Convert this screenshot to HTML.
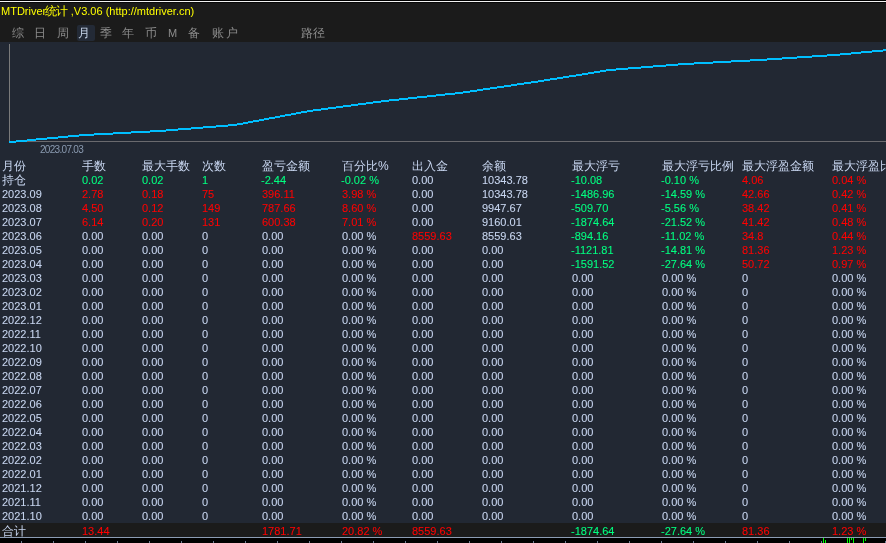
<!DOCTYPE html>
<html><head><meta charset="utf-8"><style>
*{margin:0;padding:0;box-sizing:border-box}
html,body{width:886px;height:543px;overflow:hidden;background:#222833;font-family:"Liberation Sans",sans-serif}
#top{position:absolute;left:0;top:0;width:886px;height:42px;background:#1b1b1b}
#l0{position:absolute;left:0;top:0;width:886px;height:1px;background:#000}
#l1{position:absolute;left:0;top:1px;width:886px;height:1px;background:#f2f2f2}
#l2{position:absolute;left:0;top:2px;width:886px;height:1px;background:#080808}
#title{position:absolute;left:1px;top:5px;font-size:11px;line-height:12px;color:#ffff00;white-space:nowrap;will-change:transform}
.tab{position:absolute;top:25px;font-size:12px;line-height:16px;color:#8c8c8c;white-space:nowrap;will-change:transform}
.tab.m{font-size:11px;top:25px}
.sel{color:#c8d6ea}
#selbox{position:absolute;left:77px;top:25px;width:18px;height:16px;background:#232a36;border-radius:2px}
#chart{position:absolute;left:0;top:0}
.n,.c{position:absolute;white-space:nowrap;will-change:transform}
.n{font-size:11px;line-height:12px;margin-top:-2px;-webkit-text-stroke:0.08px currentColor}
.c{font-size:12px;line-height:14px;margin-top:-3px}
#date{position:absolute;left:40px;top:144px;font-size:10px;line-height:11px;color:#8a9ab0;letter-spacing:-0.7px;will-change:transform}
#tot{position:absolute;left:0;top:523px;width:886px;height:14px;background:#1b1b1b;overflow:hidden}
#bl{position:absolute;left:0;top:537px;width:886px;height:1px;background:#8c9cb4}
#bot{position:absolute;left:0;top:538px;width:886px;height:5px;background:#000}
.tk{position:absolute;top:541px;width:1px;height:2px;background:#6f7f95}
.gm{position:absolute;width:1px;background:#00ff00}
</style></head><body>
<div id="top"></div><div id="l0"></div><div id="l1"></div><div id="l2"></div>
<div id="title">MTDriver<span style="font-size:12px;margin-left:-1.5px;letter-spacing:-0.5px">统计</span> ,V3.06 (http://mtdriver.cn)</div>
<div id="selbox"></div>
<div class="tab" style="left:12px">综</div><div class="tab" style="left:34px">日</div><div class="tab" style="left:57px">周</div><div class="tab sel" style="left:78px">月</div><div class="tab" style="left:100px">季</div><div class="tab" style="left:122px">年</div><div class="tab" style="left:145px">币</div><div class="tab m" style="left:168px">M</div><div class="tab" style="left:188px">备</div><div class="tab" style="left:212px;letter-spacing:1.5px">账户</div><div class="tab" style="left:301px">路径</div>
<svg id="chart" width="886" height="160" shape-rendering="crispEdges">
<line x1="9.5" y1="44" x2="9.5" y2="142" stroke="#7a7a7a" stroke-width="1"/>
<line x1="9" y1="141.5" x2="886" y2="141.5" stroke="#6a6a6e" stroke-width="1"/>
<path d="M9 141h7v2h-7zM16 140h11v2h-11zM27 139h9v2h-9zM36 138h11v2h-11zM47 137h11v2h-11zM58 136h10v2h-10zM68 135h11v2h-11zM79 134h15v2h-15zM94 133h19v2h-19zM113 132h18v2h-18zM131 131h19v2h-19zM150 130h16v2h-16zM166 129h12v2h-12zM178 128h13v2h-13zM191 127h12v2h-12zM203 126h13v2h-13zM216 125h12v2h-12zM228 124h9v2h-9zM237 123h6v2h-6zM243 122h5v2h-5zM248 121h5v2h-5zM253 120h6v2h-6zM259 119h5v2h-5zM264 118h5v2h-5zM269 117h6v2h-6zM275 116h5v2h-5zM280 115h5v2h-5zM285 114h6v2h-6zM291 113h5v2h-5zM296 112h5v2h-5zM301 111h6v2h-6zM307 110h6v2h-6zM313 109h8v2h-8zM321 108h7v2h-7zM328 107h8v2h-8zM336 106h7v2h-7zM343 105h8v2h-8zM351 104h7v2h-7zM358 103h8v2h-8zM366 102h7v2h-7zM373 101h8v2h-8zM381 100h8v2h-8zM389 99h10v2h-10zM399 98h9v2h-9zM408 97h9v2h-9zM417 96h10v2h-10zM427 95h9v2h-9zM436 94h9v2h-9zM445 93h10v2h-10zM455 92h8v2h-8zM463 91h7v2h-7zM470 90h7v2h-7zM477 89h6v2h-6zM483 88h7v2h-7zM490 87h7v2h-7zM497 86h7v2h-7zM504 85h7v2h-7zM511 84h6v2h-6zM517 83h7v2h-7zM524 82h7v2h-7zM531 81h7v2h-7zM538 80h6v2h-6zM544 79h6v2h-6zM550 78h7v2h-7zM557 77h6v2h-6zM563 76h6v2h-6zM569 75h7v2h-7zM576 74h6v2h-6zM582 73h6v2h-6zM588 72h6v2h-6zM594 71h6v2h-6zM600 70h6v2h-6zM606 69h10v2h-10zM616 68h12v2h-12zM628 67h13v2h-13zM641 66h12v2h-12zM653 65h13v2h-13zM666 64h12v2h-12zM678 63h16v2h-16zM694 62h19v2h-19zM713 61h18v2h-18zM731 60h19v2h-19zM750 59h17v2h-17zM767 58h15v2h-15zM782 57h15v2h-15zM797 56h15v2h-15zM812 55h15v2h-15zM827 54h13v2h-13zM840 53h11v2h-11zM851 52h10v2h-10zM861 51h11v2h-11zM872 50h11v2h-11zM883 49h3v2h-3z" fill="#00bfff"/>
</svg>
<div id="date">2023.07.03</div>
<div class="c" style="left:2px;top:162px;color:#c8d6f0">月份</div>
<div class="c" style="left:82px;top:162px;color:#c8d6f0">手数</div>
<div class="c" style="left:142px;top:162px;color:#c8d6f0">最大手数</div>
<div class="c" style="left:202px;top:162px;color:#c8d6f0">次数</div>
<div class="c" style="left:262px;top:162px;color:#c8d6f0">盈亏金额</div>
<div class="c" style="left:342px;top:162px;color:#c8d6f0">百分比%</div>
<div class="c" style="left:412px;top:162px;color:#c8d6f0">出入金</div>
<div class="c" style="left:482px;top:162px;color:#c8d6f0">余额</div>
<div class="c" style="left:572px;top:162px;color:#c8d6f0">最大浮亏</div>
<div class="c" style="left:662px;top:162px;color:#c8d6f0">最大浮亏比例</div>
<div class="c" style="left:742px;top:162px;color:#c8d6f0">最大浮盈金额</div>
<div class="c" style="left:832px;top:162px;color:#c8d6f0">最大浮盈比例</div>
<div class="c" style="left:2px;top:176px;color:#c8d6f0">持仓</div>
<div class="n" style="left:82px;top:176px;color:#00ff80">0.02</div>
<div class="n" style="left:142px;top:176px;color:#00ff80">0.02</div>
<div class="n" style="left:202px;top:176px;color:#00ff80">1</div>
<div class="n" style="left:261px;top:176px;color:#00ff80">-2.44</div>
<div class="n" style="left:341px;top:176px;color:#00ff80">-0.02 %</div>
<div class="n" style="left:412px;top:176px;color:#c8d6f0">0.00</div>
<div class="n" style="left:482px;top:176px;color:#c8d6f0">10343.78</div>
<div class="n" style="left:571px;top:176px;color:#00ff80">-10.08</div>
<div class="n" style="left:661px;top:176px;color:#00ff80">-0.10 %</div>
<div class="n" style="left:742px;top:176px;color:#ff0000">4.06</div>
<div class="n" style="left:832px;top:176px;color:#ff0000">0.04 %</div>
<div class="n" style="left:2px;top:190px;color:#c8d6f0">2023.09</div>
<div class="n" style="left:82px;top:190px;color:#ff0000">2.78</div>
<div class="n" style="left:142px;top:190px;color:#ff0000">0.18</div>
<div class="n" style="left:202px;top:190px;color:#ff0000">75</div>
<div class="n" style="left:262px;top:190px;color:#ff0000">396.11</div>
<div class="n" style="left:342px;top:190px;color:#ff0000">3.98 %</div>
<div class="n" style="left:412px;top:190px;color:#c8d6f0">0.00</div>
<div class="n" style="left:482px;top:190px;color:#c8d6f0">10343.78</div>
<div class="n" style="left:571px;top:190px;color:#00ff80">-1486.96</div>
<div class="n" style="left:661px;top:190px;color:#00ff80">-14.59 %</div>
<div class="n" style="left:742px;top:190px;color:#ff0000">42.66</div>
<div class="n" style="left:832px;top:190px;color:#ff0000">0.42 %</div>
<div class="n" style="left:2px;top:204px;color:#c8d6f0">2023.08</div>
<div class="n" style="left:82px;top:204px;color:#ff0000">4.50</div>
<div class="n" style="left:142px;top:204px;color:#ff0000">0.12</div>
<div class="n" style="left:202px;top:204px;color:#ff0000">149</div>
<div class="n" style="left:262px;top:204px;color:#ff0000">787.66</div>
<div class="n" style="left:342px;top:204px;color:#ff0000">8.60 %</div>
<div class="n" style="left:412px;top:204px;color:#c8d6f0">0.00</div>
<div class="n" style="left:482px;top:204px;color:#c8d6f0">9947.67</div>
<div class="n" style="left:571px;top:204px;color:#00ff80">-509.70</div>
<div class="n" style="left:661px;top:204px;color:#00ff80">-5.56 %</div>
<div class="n" style="left:742px;top:204px;color:#ff0000">38.42</div>
<div class="n" style="left:832px;top:204px;color:#ff0000">0.41 %</div>
<div class="n" style="left:2px;top:218px;color:#c8d6f0">2023.07</div>
<div class="n" style="left:82px;top:218px;color:#ff0000">6.14</div>
<div class="n" style="left:142px;top:218px;color:#ff0000">0.20</div>
<div class="n" style="left:202px;top:218px;color:#ff0000">131</div>
<div class="n" style="left:262px;top:218px;color:#ff0000">600.38</div>
<div class="n" style="left:342px;top:218px;color:#ff0000">7.01 %</div>
<div class="n" style="left:412px;top:218px;color:#c8d6f0">0.00</div>
<div class="n" style="left:482px;top:218px;color:#c8d6f0">9160.01</div>
<div class="n" style="left:571px;top:218px;color:#00ff80">-1874.64</div>
<div class="n" style="left:661px;top:218px;color:#00ff80">-21.52 %</div>
<div class="n" style="left:742px;top:218px;color:#ff0000">41.42</div>
<div class="n" style="left:832px;top:218px;color:#ff0000">0.48 %</div>
<div class="n" style="left:2px;top:232px;color:#c8d6f0">2023.06</div>
<div class="n" style="left:82px;top:232px;color:#c8d6f0">0.00</div>
<div class="n" style="left:142px;top:232px;color:#c8d6f0">0.00</div>
<div class="n" style="left:202px;top:232px;color:#c8d6f0">0</div>
<div class="n" style="left:262px;top:232px;color:#c8d6f0">0.00</div>
<div class="n" style="left:342px;top:232px;color:#c8d6f0">0.00 %</div>
<div class="n" style="left:412px;top:232px;color:#ff0000">8559.63</div>
<div class="n" style="left:482px;top:232px;color:#c8d6f0">8559.63</div>
<div class="n" style="left:571px;top:232px;color:#00ff80">-894.16</div>
<div class="n" style="left:661px;top:232px;color:#00ff80">-11.02 %</div>
<div class="n" style="left:742px;top:232px;color:#ff0000">34.8</div>
<div class="n" style="left:832px;top:232px;color:#ff0000">0.44 %</div>
<div class="n" style="left:2px;top:246px;color:#c8d6f0">2023.05</div>
<div class="n" style="left:82px;top:246px;color:#c8d6f0">0.00</div>
<div class="n" style="left:142px;top:246px;color:#c8d6f0">0.00</div>
<div class="n" style="left:202px;top:246px;color:#c8d6f0">0</div>
<div class="n" style="left:262px;top:246px;color:#c8d6f0">0.00</div>
<div class="n" style="left:342px;top:246px;color:#c8d6f0">0.00 %</div>
<div class="n" style="left:412px;top:246px;color:#c8d6f0">0.00</div>
<div class="n" style="left:482px;top:246px;color:#c8d6f0">0.00</div>
<div class="n" style="left:571px;top:246px;color:#00ff80">-1121.81</div>
<div class="n" style="left:661px;top:246px;color:#00ff80">-14.81 %</div>
<div class="n" style="left:742px;top:246px;color:#ff0000">81.36</div>
<div class="n" style="left:832px;top:246px;color:#ff0000">1.23 %</div>
<div class="n" style="left:2px;top:260px;color:#c8d6f0">2023.04</div>
<div class="n" style="left:82px;top:260px;color:#c8d6f0">0.00</div>
<div class="n" style="left:142px;top:260px;color:#c8d6f0">0.00</div>
<div class="n" style="left:202px;top:260px;color:#c8d6f0">0</div>
<div class="n" style="left:262px;top:260px;color:#c8d6f0">0.00</div>
<div class="n" style="left:342px;top:260px;color:#c8d6f0">0.00 %</div>
<div class="n" style="left:412px;top:260px;color:#c8d6f0">0.00</div>
<div class="n" style="left:482px;top:260px;color:#c8d6f0">0.00</div>
<div class="n" style="left:571px;top:260px;color:#00ff80">-1591.52</div>
<div class="n" style="left:661px;top:260px;color:#00ff80">-27.64 %</div>
<div class="n" style="left:742px;top:260px;color:#ff0000">50.72</div>
<div class="n" style="left:832px;top:260px;color:#ff0000">0.97 %</div>
<div class="n" style="left:2px;top:274px;color:#c8d6f0">2023.03</div>
<div class="n" style="left:82px;top:274px;color:#c8d6f0">0.00</div>
<div class="n" style="left:142px;top:274px;color:#c8d6f0">0.00</div>
<div class="n" style="left:202px;top:274px;color:#c8d6f0">0</div>
<div class="n" style="left:262px;top:274px;color:#c8d6f0">0.00</div>
<div class="n" style="left:342px;top:274px;color:#c8d6f0">0.00 %</div>
<div class="n" style="left:412px;top:274px;color:#c8d6f0">0.00</div>
<div class="n" style="left:482px;top:274px;color:#c8d6f0">0.00</div>
<div class="n" style="left:572px;top:274px;color:#c8d6f0">0.00</div>
<div class="n" style="left:662px;top:274px;color:#c8d6f0">0.00 %</div>
<div class="n" style="left:742px;top:274px;color:#c8d6f0">0</div>
<div class="n" style="left:832px;top:274px;color:#c8d6f0">0.00 %</div>
<div class="n" style="left:2px;top:288px;color:#c8d6f0">2023.02</div>
<div class="n" style="left:82px;top:288px;color:#c8d6f0">0.00</div>
<div class="n" style="left:142px;top:288px;color:#c8d6f0">0.00</div>
<div class="n" style="left:202px;top:288px;color:#c8d6f0">0</div>
<div class="n" style="left:262px;top:288px;color:#c8d6f0">0.00</div>
<div class="n" style="left:342px;top:288px;color:#c8d6f0">0.00 %</div>
<div class="n" style="left:412px;top:288px;color:#c8d6f0">0.00</div>
<div class="n" style="left:482px;top:288px;color:#c8d6f0">0.00</div>
<div class="n" style="left:572px;top:288px;color:#c8d6f0">0.00</div>
<div class="n" style="left:662px;top:288px;color:#c8d6f0">0.00 %</div>
<div class="n" style="left:742px;top:288px;color:#c8d6f0">0</div>
<div class="n" style="left:832px;top:288px;color:#c8d6f0">0.00 %</div>
<div class="n" style="left:2px;top:302px;color:#c8d6f0">2023.01</div>
<div class="n" style="left:82px;top:302px;color:#c8d6f0">0.00</div>
<div class="n" style="left:142px;top:302px;color:#c8d6f0">0.00</div>
<div class="n" style="left:202px;top:302px;color:#c8d6f0">0</div>
<div class="n" style="left:262px;top:302px;color:#c8d6f0">0.00</div>
<div class="n" style="left:342px;top:302px;color:#c8d6f0">0.00 %</div>
<div class="n" style="left:412px;top:302px;color:#c8d6f0">0.00</div>
<div class="n" style="left:482px;top:302px;color:#c8d6f0">0.00</div>
<div class="n" style="left:572px;top:302px;color:#c8d6f0">0.00</div>
<div class="n" style="left:662px;top:302px;color:#c8d6f0">0.00 %</div>
<div class="n" style="left:742px;top:302px;color:#c8d6f0">0</div>
<div class="n" style="left:832px;top:302px;color:#c8d6f0">0.00 %</div>
<div class="n" style="left:2px;top:316px;color:#c8d6f0">2022.12</div>
<div class="n" style="left:82px;top:316px;color:#c8d6f0">0.00</div>
<div class="n" style="left:142px;top:316px;color:#c8d6f0">0.00</div>
<div class="n" style="left:202px;top:316px;color:#c8d6f0">0</div>
<div class="n" style="left:262px;top:316px;color:#c8d6f0">0.00</div>
<div class="n" style="left:342px;top:316px;color:#c8d6f0">0.00 %</div>
<div class="n" style="left:412px;top:316px;color:#c8d6f0">0.00</div>
<div class="n" style="left:482px;top:316px;color:#c8d6f0">0.00</div>
<div class="n" style="left:572px;top:316px;color:#c8d6f0">0.00</div>
<div class="n" style="left:662px;top:316px;color:#c8d6f0">0.00 %</div>
<div class="n" style="left:742px;top:316px;color:#c8d6f0">0</div>
<div class="n" style="left:832px;top:316px;color:#c8d6f0">0.00 %</div>
<div class="n" style="left:2px;top:330px;color:#c8d6f0">2022.11</div>
<div class="n" style="left:82px;top:330px;color:#c8d6f0">0.00</div>
<div class="n" style="left:142px;top:330px;color:#c8d6f0">0.00</div>
<div class="n" style="left:202px;top:330px;color:#c8d6f0">0</div>
<div class="n" style="left:262px;top:330px;color:#c8d6f0">0.00</div>
<div class="n" style="left:342px;top:330px;color:#c8d6f0">0.00 %</div>
<div class="n" style="left:412px;top:330px;color:#c8d6f0">0.00</div>
<div class="n" style="left:482px;top:330px;color:#c8d6f0">0.00</div>
<div class="n" style="left:572px;top:330px;color:#c8d6f0">0.00</div>
<div class="n" style="left:662px;top:330px;color:#c8d6f0">0.00 %</div>
<div class="n" style="left:742px;top:330px;color:#c8d6f0">0</div>
<div class="n" style="left:832px;top:330px;color:#c8d6f0">0.00 %</div>
<div class="n" style="left:2px;top:344px;color:#c8d6f0">2022.10</div>
<div class="n" style="left:82px;top:344px;color:#c8d6f0">0.00</div>
<div class="n" style="left:142px;top:344px;color:#c8d6f0">0.00</div>
<div class="n" style="left:202px;top:344px;color:#c8d6f0">0</div>
<div class="n" style="left:262px;top:344px;color:#c8d6f0">0.00</div>
<div class="n" style="left:342px;top:344px;color:#c8d6f0">0.00 %</div>
<div class="n" style="left:412px;top:344px;color:#c8d6f0">0.00</div>
<div class="n" style="left:482px;top:344px;color:#c8d6f0">0.00</div>
<div class="n" style="left:572px;top:344px;color:#c8d6f0">0.00</div>
<div class="n" style="left:662px;top:344px;color:#c8d6f0">0.00 %</div>
<div class="n" style="left:742px;top:344px;color:#c8d6f0">0</div>
<div class="n" style="left:832px;top:344px;color:#c8d6f0">0.00 %</div>
<div class="n" style="left:2px;top:358px;color:#c8d6f0">2022.09</div>
<div class="n" style="left:82px;top:358px;color:#c8d6f0">0.00</div>
<div class="n" style="left:142px;top:358px;color:#c8d6f0">0.00</div>
<div class="n" style="left:202px;top:358px;color:#c8d6f0">0</div>
<div class="n" style="left:262px;top:358px;color:#c8d6f0">0.00</div>
<div class="n" style="left:342px;top:358px;color:#c8d6f0">0.00 %</div>
<div class="n" style="left:412px;top:358px;color:#c8d6f0">0.00</div>
<div class="n" style="left:482px;top:358px;color:#c8d6f0">0.00</div>
<div class="n" style="left:572px;top:358px;color:#c8d6f0">0.00</div>
<div class="n" style="left:662px;top:358px;color:#c8d6f0">0.00 %</div>
<div class="n" style="left:742px;top:358px;color:#c8d6f0">0</div>
<div class="n" style="left:832px;top:358px;color:#c8d6f0">0.00 %</div>
<div class="n" style="left:2px;top:372px;color:#c8d6f0">2022.08</div>
<div class="n" style="left:82px;top:372px;color:#c8d6f0">0.00</div>
<div class="n" style="left:142px;top:372px;color:#c8d6f0">0.00</div>
<div class="n" style="left:202px;top:372px;color:#c8d6f0">0</div>
<div class="n" style="left:262px;top:372px;color:#c8d6f0">0.00</div>
<div class="n" style="left:342px;top:372px;color:#c8d6f0">0.00 %</div>
<div class="n" style="left:412px;top:372px;color:#c8d6f0">0.00</div>
<div class="n" style="left:482px;top:372px;color:#c8d6f0">0.00</div>
<div class="n" style="left:572px;top:372px;color:#c8d6f0">0.00</div>
<div class="n" style="left:662px;top:372px;color:#c8d6f0">0.00 %</div>
<div class="n" style="left:742px;top:372px;color:#c8d6f0">0</div>
<div class="n" style="left:832px;top:372px;color:#c8d6f0">0.00 %</div>
<div class="n" style="left:2px;top:386px;color:#c8d6f0">2022.07</div>
<div class="n" style="left:82px;top:386px;color:#c8d6f0">0.00</div>
<div class="n" style="left:142px;top:386px;color:#c8d6f0">0.00</div>
<div class="n" style="left:202px;top:386px;color:#c8d6f0">0</div>
<div class="n" style="left:262px;top:386px;color:#c8d6f0">0.00</div>
<div class="n" style="left:342px;top:386px;color:#c8d6f0">0.00 %</div>
<div class="n" style="left:412px;top:386px;color:#c8d6f0">0.00</div>
<div class="n" style="left:482px;top:386px;color:#c8d6f0">0.00</div>
<div class="n" style="left:572px;top:386px;color:#c8d6f0">0.00</div>
<div class="n" style="left:662px;top:386px;color:#c8d6f0">0.00 %</div>
<div class="n" style="left:742px;top:386px;color:#c8d6f0">0</div>
<div class="n" style="left:832px;top:386px;color:#c8d6f0">0.00 %</div>
<div class="n" style="left:2px;top:400px;color:#c8d6f0">2022.06</div>
<div class="n" style="left:82px;top:400px;color:#c8d6f0">0.00</div>
<div class="n" style="left:142px;top:400px;color:#c8d6f0">0.00</div>
<div class="n" style="left:202px;top:400px;color:#c8d6f0">0</div>
<div class="n" style="left:262px;top:400px;color:#c8d6f0">0.00</div>
<div class="n" style="left:342px;top:400px;color:#c8d6f0">0.00 %</div>
<div class="n" style="left:412px;top:400px;color:#c8d6f0">0.00</div>
<div class="n" style="left:482px;top:400px;color:#c8d6f0">0.00</div>
<div class="n" style="left:572px;top:400px;color:#c8d6f0">0.00</div>
<div class="n" style="left:662px;top:400px;color:#c8d6f0">0.00 %</div>
<div class="n" style="left:742px;top:400px;color:#c8d6f0">0</div>
<div class="n" style="left:832px;top:400px;color:#c8d6f0">0.00 %</div>
<div class="n" style="left:2px;top:414px;color:#c8d6f0">2022.05</div>
<div class="n" style="left:82px;top:414px;color:#c8d6f0">0.00</div>
<div class="n" style="left:142px;top:414px;color:#c8d6f0">0.00</div>
<div class="n" style="left:202px;top:414px;color:#c8d6f0">0</div>
<div class="n" style="left:262px;top:414px;color:#c8d6f0">0.00</div>
<div class="n" style="left:342px;top:414px;color:#c8d6f0">0.00 %</div>
<div class="n" style="left:412px;top:414px;color:#c8d6f0">0.00</div>
<div class="n" style="left:482px;top:414px;color:#c8d6f0">0.00</div>
<div class="n" style="left:572px;top:414px;color:#c8d6f0">0.00</div>
<div class="n" style="left:662px;top:414px;color:#c8d6f0">0.00 %</div>
<div class="n" style="left:742px;top:414px;color:#c8d6f0">0</div>
<div class="n" style="left:832px;top:414px;color:#c8d6f0">0.00 %</div>
<div class="n" style="left:2px;top:428px;color:#c8d6f0">2022.04</div>
<div class="n" style="left:82px;top:428px;color:#c8d6f0">0.00</div>
<div class="n" style="left:142px;top:428px;color:#c8d6f0">0.00</div>
<div class="n" style="left:202px;top:428px;color:#c8d6f0">0</div>
<div class="n" style="left:262px;top:428px;color:#c8d6f0">0.00</div>
<div class="n" style="left:342px;top:428px;color:#c8d6f0">0.00 %</div>
<div class="n" style="left:412px;top:428px;color:#c8d6f0">0.00</div>
<div class="n" style="left:482px;top:428px;color:#c8d6f0">0.00</div>
<div class="n" style="left:572px;top:428px;color:#c8d6f0">0.00</div>
<div class="n" style="left:662px;top:428px;color:#c8d6f0">0.00 %</div>
<div class="n" style="left:742px;top:428px;color:#c8d6f0">0</div>
<div class="n" style="left:832px;top:428px;color:#c8d6f0">0.00 %</div>
<div class="n" style="left:2px;top:442px;color:#c8d6f0">2022.03</div>
<div class="n" style="left:82px;top:442px;color:#c8d6f0">0.00</div>
<div class="n" style="left:142px;top:442px;color:#c8d6f0">0.00</div>
<div class="n" style="left:202px;top:442px;color:#c8d6f0">0</div>
<div class="n" style="left:262px;top:442px;color:#c8d6f0">0.00</div>
<div class="n" style="left:342px;top:442px;color:#c8d6f0">0.00 %</div>
<div class="n" style="left:412px;top:442px;color:#c8d6f0">0.00</div>
<div class="n" style="left:482px;top:442px;color:#c8d6f0">0.00</div>
<div class="n" style="left:572px;top:442px;color:#c8d6f0">0.00</div>
<div class="n" style="left:662px;top:442px;color:#c8d6f0">0.00 %</div>
<div class="n" style="left:742px;top:442px;color:#c8d6f0">0</div>
<div class="n" style="left:832px;top:442px;color:#c8d6f0">0.00 %</div>
<div class="n" style="left:2px;top:456px;color:#c8d6f0">2022.02</div>
<div class="n" style="left:82px;top:456px;color:#c8d6f0">0.00</div>
<div class="n" style="left:142px;top:456px;color:#c8d6f0">0.00</div>
<div class="n" style="left:202px;top:456px;color:#c8d6f0">0</div>
<div class="n" style="left:262px;top:456px;color:#c8d6f0">0.00</div>
<div class="n" style="left:342px;top:456px;color:#c8d6f0">0.00 %</div>
<div class="n" style="left:412px;top:456px;color:#c8d6f0">0.00</div>
<div class="n" style="left:482px;top:456px;color:#c8d6f0">0.00</div>
<div class="n" style="left:572px;top:456px;color:#c8d6f0">0.00</div>
<div class="n" style="left:662px;top:456px;color:#c8d6f0">0.00 %</div>
<div class="n" style="left:742px;top:456px;color:#c8d6f0">0</div>
<div class="n" style="left:832px;top:456px;color:#c8d6f0">0.00 %</div>
<div class="n" style="left:2px;top:470px;color:#c8d6f0">2022.01</div>
<div class="n" style="left:82px;top:470px;color:#c8d6f0">0.00</div>
<div class="n" style="left:142px;top:470px;color:#c8d6f0">0.00</div>
<div class="n" style="left:202px;top:470px;color:#c8d6f0">0</div>
<div class="n" style="left:262px;top:470px;color:#c8d6f0">0.00</div>
<div class="n" style="left:342px;top:470px;color:#c8d6f0">0.00 %</div>
<div class="n" style="left:412px;top:470px;color:#c8d6f0">0.00</div>
<div class="n" style="left:482px;top:470px;color:#c8d6f0">0.00</div>
<div class="n" style="left:572px;top:470px;color:#c8d6f0">0.00</div>
<div class="n" style="left:662px;top:470px;color:#c8d6f0">0.00 %</div>
<div class="n" style="left:742px;top:470px;color:#c8d6f0">0</div>
<div class="n" style="left:832px;top:470px;color:#c8d6f0">0.00 %</div>
<div class="n" style="left:2px;top:484px;color:#c8d6f0">2021.12</div>
<div class="n" style="left:82px;top:484px;color:#c8d6f0">0.00</div>
<div class="n" style="left:142px;top:484px;color:#c8d6f0">0.00</div>
<div class="n" style="left:202px;top:484px;color:#c8d6f0">0</div>
<div class="n" style="left:262px;top:484px;color:#c8d6f0">0.00</div>
<div class="n" style="left:342px;top:484px;color:#c8d6f0">0.00 %</div>
<div class="n" style="left:412px;top:484px;color:#c8d6f0">0.00</div>
<div class="n" style="left:482px;top:484px;color:#c8d6f0">0.00</div>
<div class="n" style="left:572px;top:484px;color:#c8d6f0">0.00</div>
<div class="n" style="left:662px;top:484px;color:#c8d6f0">0.00 %</div>
<div class="n" style="left:742px;top:484px;color:#c8d6f0">0</div>
<div class="n" style="left:832px;top:484px;color:#c8d6f0">0.00 %</div>
<div class="n" style="left:2px;top:498px;color:#c8d6f0">2021.11</div>
<div class="n" style="left:82px;top:498px;color:#c8d6f0">0.00</div>
<div class="n" style="left:142px;top:498px;color:#c8d6f0">0.00</div>
<div class="n" style="left:202px;top:498px;color:#c8d6f0">0</div>
<div class="n" style="left:262px;top:498px;color:#c8d6f0">0.00</div>
<div class="n" style="left:342px;top:498px;color:#c8d6f0">0.00 %</div>
<div class="n" style="left:412px;top:498px;color:#c8d6f0">0.00</div>
<div class="n" style="left:482px;top:498px;color:#c8d6f0">0.00</div>
<div class="n" style="left:572px;top:498px;color:#c8d6f0">0.00</div>
<div class="n" style="left:662px;top:498px;color:#c8d6f0">0.00 %</div>
<div class="n" style="left:742px;top:498px;color:#c8d6f0">0</div>
<div class="n" style="left:832px;top:498px;color:#c8d6f0">0.00 %</div>
<div class="n" style="left:2px;top:512px;color:#c8d6f0">2021.10</div>
<div class="n" style="left:82px;top:512px;color:#c8d6f0">0.00</div>
<div class="n" style="left:142px;top:512px;color:#c8d6f0">0.00</div>
<div class="n" style="left:202px;top:512px;color:#c8d6f0">0</div>
<div class="n" style="left:262px;top:512px;color:#c8d6f0">0.00</div>
<div class="n" style="left:342px;top:512px;color:#c8d6f0">0.00 %</div>
<div class="n" style="left:412px;top:512px;color:#c8d6f0">0.00</div>
<div class="n" style="left:482px;top:512px;color:#c8d6f0">0.00</div>
<div class="n" style="left:572px;top:512px;color:#c8d6f0">0.00</div>
<div class="n" style="left:662px;top:512px;color:#c8d6f0">0.00 %</div>
<div class="n" style="left:742px;top:512px;color:#c8d6f0">0</div>
<div class="n" style="left:832px;top:512px;color:#c8d6f0">0.00 %</div>
<div id="tot"><div style="position:absolute;left:0;top:-523px;width:886px;height:543px">
<div class="c" style="left:2px;top:527px;color:#c8d6f0">合计</div>
<div class="n" style="left:82px;top:527px;color:#ff0000">13.44</div>
<div class="n" style="left:262px;top:527px;color:#ff0000">1781.71</div>
<div class="n" style="left:342px;top:527px;color:#ff0000">20.82 %</div>
<div class="n" style="left:412px;top:527px;color:#ff0000">8559.63</div>
<div class="n" style="left:571px;top:527px;color:#00ff80">-1874.64</div>
<div class="n" style="left:661px;top:527px;color:#00ff80">-27.64 %</div>
<div class="n" style="left:742px;top:527px;color:#ff0000">81.36</div>
<div class="n" style="left:832px;top:527px;color:#ff0000">1.23 %</div>
</div></div>
<div id="bl"></div>
<div id="bot"></div>
<div class="tk" style="left:21px"></div><div class="tk" style="left:53px"></div><div class="tk" style="left:85px"></div><div class="tk" style="left:117px"></div><div class="tk" style="left:149px"></div><div class="tk" style="left:181px"></div><div class="tk" style="left:213px"></div><div class="tk" style="left:245px"></div><div class="tk" style="left:277px"></div><div class="tk" style="left:309px"></div><div class="tk" style="left:341px"></div><div class="tk" style="left:373px"></div><div class="tk" style="left:405px"></div><div class="tk" style="left:437px"></div><div class="tk" style="left:469px"></div><div class="tk" style="left:501px"></div><div class="tk" style="left:533px"></div><div class="tk" style="left:565px"></div><div class="tk" style="left:597px"></div><div class="tk" style="left:629px"></div><div class="tk" style="left:661px"></div><div class="tk" style="left:693px"></div><div class="tk" style="left:725px"></div><div class="tk" style="left:757px"></div><div class="tk" style="left:789px"></div><div class="tk" style="left:821px"></div><div class="tk" style="left:853px"></div><div class="tk" style="left:885px"></div>
<div class="gm" style="left:823px;top:538px;height:5px"></div><div class="gm" style="left:825px;top:540px;height:3px"></div><div class="gm" style="left:847px;top:538px;height:5px"></div><div class="gm" style="left:849px;top:538px;height:5px"></div><div class="gm" style="left:851px;top:538px;height:2px"></div><div class="gm" style="left:853px;top:538px;height:5px"></div><div class="gm" style="left:863px;top:538px;height:5px"></div><div class="gm" style="left:865px;top:538px;height:3px"></div>
</body></html>
